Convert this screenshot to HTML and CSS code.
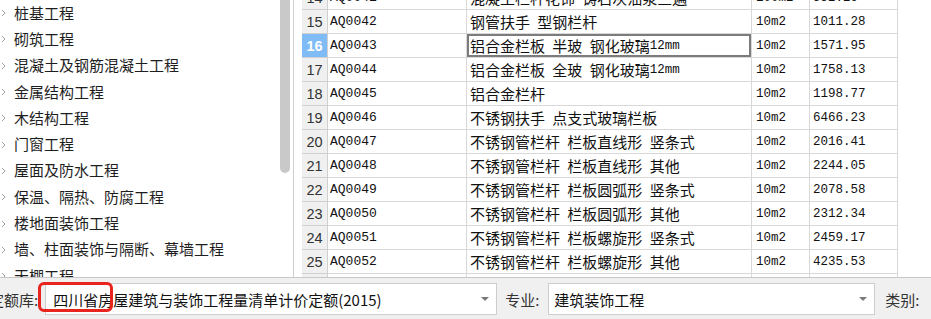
FILE: index.html
```html
<!DOCTYPE html>
<html lang="zh-CN">
<head>
    <meta charset="UTF-8">
    <title>定额库</title>
    <link rel="stylesheet" href="styles.css">
</head>
<body>
    <div class="window">
        <div class="main">
            <!-- chapter tree -->
            <div class="tree">
                <ul class="tree-list">
                    <li class="tree-item"><svg class="chev" viewBox="0 0 5 8"><polyline points="1,1 4,4 1,7"/></svg>桩基工程</li>
                    <li class="tree-item"><svg class="chev" viewBox="0 0 5 8"><polyline points="1,1 4,4 1,7"/></svg>砌筑工程</li>
                    <li class="tree-item"><svg class="chev" viewBox="0 0 5 8"><polyline points="1,1 4,4 1,7"/></svg>混凝土及钢筋混凝土工程</li>
                    <li class="tree-item"><svg class="chev" viewBox="0 0 5 8"><polyline points="1,1 4,4 1,7"/></svg>金属结构工程</li>
                    <li class="tree-item"><svg class="chev" viewBox="0 0 5 8"><polyline points="1,1 4,4 1,7"/></svg>木结构工程</li>
                    <li class="tree-item"><svg class="chev" viewBox="0 0 5 8"><polyline points="1,1 4,4 1,7"/></svg>门窗工程</li>
                    <li class="tree-item"><svg class="chev" viewBox="0 0 5 8"><polyline points="1,1 4,4 1,7"/></svg>屋面及防水工程</li>
                    <li class="tree-item"><svg class="chev" viewBox="0 0 5 8"><polyline points="1,1 4,4 1,7"/></svg>保温、隔热、防腐工程</li>
                    <li class="tree-item"><svg class="chev" viewBox="0 0 5 8"><polyline points="1,1 4,4 1,7"/></svg>楼地面装饰工程</li>
                    <li class="tree-item"><svg class="chev" viewBox="0 0 5 8"><polyline points="1,1 4,4 1,7"/></svg>墙、柱面装饰与隔断、幕墙工程</li>
                    <li class="tree-item"><svg class="chev" viewBox="0 0 5 8"><polyline points="1,1 4,4 1,7"/></svg>天棚工程</li>
                </ul>
                <div class="scrollbar"><div class="thumb"></div></div>
            </div>
            <div class="splitter"></div>

            <!-- quota grid -->
            <div class="grid">
                <div class="row first"><div class="cell num">14</div><div class="cell code">AQ0041</div><div class="cell name">混凝土栏杆花饰 铸石灰油浆三遍</div><div class="cell unit">100m2</div><div class="cell price">552.29</div></div>
                <div class="row"><div class="cell num">15</div><div class="cell code">AQ0042</div><div class="cell name">钢管扶手 型钢栏杆</div><div class="cell unit">10m2</div><div class="cell price">1011.28</div></div>
                <div class="row selected"><div class="cell num">16</div><div class="cell code">AQ0043</div><div class="cell name">铝合金栏板 半玻 钢化玻璃<span class="small">12mm</span></div><div class="cell unit">10m2</div><div class="cell price">1571.95</div></div>
                <div class="row"><div class="cell num">17</div><div class="cell code">AQ0044</div><div class="cell name">铝合金栏板 全玻 钢化玻璃<span class="small">12mm</span></div><div class="cell unit">10m2</div><div class="cell price">1758.13</div></div>
                <div class="row"><div class="cell num">18</div><div class="cell code">AQ0045</div><div class="cell name">铝合金栏杆</div><div class="cell unit">10m2</div><div class="cell price">1198.77</div></div>
                <div class="row"><div class="cell num">19</div><div class="cell code">AQ0046</div><div class="cell name">不锈钢扶手 点支式玻璃栏板</div><div class="cell unit">10m2</div><div class="cell price">6466.23</div></div>
                <div class="row"><div class="cell num">20</div><div class="cell code">AQ0047</div><div class="cell name">不锈钢管栏杆 栏板直线形 竖条式</div><div class="cell unit">10m2</div><div class="cell price">2016.41</div></div>
                <div class="row"><div class="cell num">21</div><div class="cell code">AQ0048</div><div class="cell name">不锈钢管栏杆 栏板直线形 其他</div><div class="cell unit">10m2</div><div class="cell price">2244.05</div></div>
                <div class="row"><div class="cell num">22</div><div class="cell code">AQ0049</div><div class="cell name">不锈钢管栏杆 栏板圆弧形 竖条式</div><div class="cell unit">10m2</div><div class="cell price">2078.58</div></div>
                <div class="row"><div class="cell num">23</div><div class="cell code">AQ0050</div><div class="cell name">不锈钢管栏杆 栏板圆弧形 其他</div><div class="cell unit">10m2</div><div class="cell price">2312.34</div></div>
                <div class="row"><div class="cell num">24</div><div class="cell code">AQ0051</div><div class="cell name">不锈钢管栏杆 栏板螺旋形 竖条式</div><div class="cell unit">10m2</div><div class="cell price">2459.17</div></div>
                <div class="row"><div class="cell num">25</div><div class="cell code">AQ0052</div><div class="cell name">不锈钢管栏杆 栏板螺旋形 其他</div><div class="cell unit">10m2</div><div class="cell price">4235.53</div></div>
                <div class="row"><div class="cell num">26</div><div class="cell code">AQ0053</div><div class="cell name">铁艺栏杆 型钢栏板</div><div class="cell unit">10m2</div><div class="cell price">1470.66</div></div>
            </div>
        </div>

        <!-- filter bar -->
        <div class="toolbar">
            <span class="label lib-label">定额库:</span>
            <div class="combo lib-combo">
                <span class="combo-text">四川省房屋建筑与装饰工程量清单计价定额(2015)</span>
                <span class="arrow"></span>
                <div class="highlight"></div>
            </div>
            <span class="label">专业:</span>
            <div class="combo major-combo">
                <span class="combo-text">建筑装饰工程</span>
                <span class="arrow"></span>
            </div>
            <span class="label">类别:</span>
        </div>
    </div>
</body>
</html>
```

FILE: styles.css
```css
* {
    margin: 0;
    padding: 0;
    box-sizing: border-box;
}

body {
    font-family: 'Noto Sans CJK SC', 'Noto Sans', sans-serif;
    background: #fff;
    overflow: hidden;
}

.window {
    width: 931px;
    height: 319px;
    display: flex;
    flex-direction: column;
    overflow: hidden;
}

.main {
    height: 278px;
    display: flex;
    border-bottom: 1px solid #c8c8c8;
}

/* tree */
.tree {
    width: 294px;
    display: flex;
    border-right: 1px solid #cfcfcf;
}

.tree-list {
    flex: 1;
    list-style: none;
    margin-top: -1px;
    overflow: hidden;
}

.tree-item {
    height: 26.3px;
    display: flex;
    align-items: center;
    font-size: 15px;
    color: #1e1e1e;
    white-space: nowrap;
}

.chev {
    width: 5px;
    height: 8px;
    margin: 2px 8px 0 1px;
    fill: none;
    stroke: #a0a0a0;
    stroke-width: 1;
}

.scrollbar {
    width: 14px;
    padding-left: 1px;
}

.thumb {
    width: 10px;
    height: 173px;
    background: #c9c9c9;
    border-radius: 0 0 5px 5px;
}

.splitter {
    width: 8px;
}

/* grid */
.grid {
    flex: 1;
    overflow: hidden;
}

.row {
    display: grid;
    grid-template-columns: 26px 139px 285px 58px 88px;
    height: 24px;
}

.row.first {
    margin-top: -14px;
}

.cell {
    border-right: 1px solid #d8d8d8;
    border-bottom: 1px solid #d8d8d8;
    display: flex;
    align-items: center;
    white-space: nowrap;
    overflow: hidden;
    color: #111;
}

.num {
    background: #f0f0f0;
    justify-content: center;
    font-family: 'Liberation Sans', sans-serif;
    font-size: 14.5px;
    color: #333;
    border-color: #d0d0d0;
}

.code {
    padding-left: 2px;
    font-family: 'Liberation Mono', monospace;
    font-size: 13px;
}

.name {
    padding-left: 3px;
    font-size: 15px;
    word-spacing: 4px;
}

.small {
    font-family: 'Liberation Mono', monospace;
    font-size: 12.5px;
}

.unit {
    padding-left: 4px;
    font-family: 'Liberation Mono', monospace;
    font-size: 12.5px;
}

.price {
    padding-left: 3px;
    font-family: 'Liberation Mono', monospace;
    font-size: 12.5px;
}

.selected .num {
    background: #7fbbf5;
    color: #fff;
    font-weight: bold;
}

.selected .name {
    box-shadow: inset 0 0 0 2px #7c7c7c;
}

/* toolbar */
.toolbar {
    flex: 1;
    background: #f0f0f0;
    display: flex;
    align-items: center;
    padding-top: 1px;
}

.label {
    font-size: 15px;
    color: #333;
    white-space: nowrap;
}

.lib-label {
    margin-left: -11px;
    margin-right: 7px;
}

.combo {
    position: relative;
    height: 32px;
    background: #fff;
    border: 1px solid #cdcdcd;
    display: flex;
    align-items: center;
    justify-content: space-between;
    padding: 0 7px 0 5px;
}

.lib-combo {
    width: 452px;
    margin-right: 8px;
    padding-left: 7px;
}

.major-combo {
    width: 327px;
    margin: 0 10px 0 9px;
}

.combo-text {
    font-size: 15px;
    color: #111;
    white-space: nowrap;
}

.arrow {
    width: 0;
    height: 0;
    border-left: 4px solid transparent;
    border-right: 4px solid transparent;
    border-top: 4px solid #7a7a7a;
}

.highlight {
    position: absolute;
    left: -8px;
    top: -2px;
    width: 75px;
    height: 30px;
    border: 3px solid #e8241e;
    border-radius: 6px;
}
```
